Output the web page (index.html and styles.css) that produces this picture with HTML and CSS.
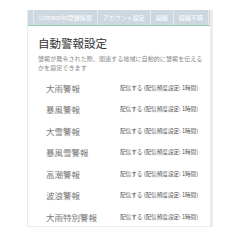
FILE: index.html
```html
<!DOCTYPE html>
<html lang="ja">
<head>
    <meta charset="UTF-8">
    <meta name="viewport" content="width=device-width, initial-scale=1.0">
    <title>自動警報設定</title>
    <link rel="stylesheet" href="styles.css">
</head>
<body>
    <div class="panel">
        <div class="tabs">
            <span class="tab tab-edge"></span>
            <span class="tab">Lineworks登録情報</span>
            <span class="tab">アカウント設定</span>
            <span class="tab">組織</span>
            <span class="tab">組織不明</span>
        </div>
        <div class="content">
            <h2 class="title">自動警報設定</h2>
            <p class="desc">警報が発令された際、関連する地域に自動的に警報を伝えるかを設定できます</p>
            <ul class="rows">
                <li class="row"><span class="name">大雨警報</span><span class="value">配信する (配信頻度設定: 1時間)</span></li>
                <li class="row"><span class="name">暴風警報</span><span class="value">配信する (配信頻度設定: 1時間)</span></li>
                <li class="row"><span class="name">大雪警報</span><span class="value">配信する (配信頻度設定: 1時間)</span></li>
                <li class="row"><span class="name">暴風雪警報</span><span class="value">配信する (配信頻度設定: 1時間)</span></li>
                <li class="row"><span class="name">高潮警報</span><span class="value">配信する (配信頻度設定: 1時間)</span></li>
                <li class="row"><span class="name">波浪警報</span><span class="value">配信する (配信頻度設定: 1時間)</span></li>
                <li class="row"><span class="name">大雨特別警報</span><span class="value">配信する (配信頻度設定: 1時間)</span></li>
            </ul>
        </div>
    </div>
</body>
</html>
```

FILE: styles.css
```css
* {margin: 0; padding: 0; box-sizing: border-box;}
body {
    background: #fff;
    padding: 10px 0 0 27px;
    font-family: "Noto Sans CJK JP", "Noto Sans", sans-serif;
}
.panel {
    width: 186px;
    height: 217px;
    border-left: 1px solid #ececec;
    border-right: 3px solid #ececec;
    border-bottom: 1px solid #ececec;
    overflow: hidden;
}
.tabs {
    display: flex;
    height: 16px;
    background: #cdd7df;
    border-bottom: 1px solid #8fd4a6;
    white-space: nowrap;
    overflow: hidden;
}
.tab {
    flex: none;
    color: #fff;
    font-size: 6px;
    line-height: 15px;
    padding: 0 5px;
    border-right: 1px solid #e3e9ee;
}
.tab-edge {
    width: 6px;
    padding: 0;
}
.content {
    padding: 9px 0 0 10px;
}
.title {
    font-size: 11.5px;
    font-weight: 400;
    color: #333;
    line-height: 16px;
}
.desc {
    margin-top: 3px;
    font-size: 6.1px;
    line-height: 9px;
    color: #888;
    padding-right: 2px;
}
.rows {
    list-style: none;
    margin-top: 5px;
}
.row {
    display: flex;
    align-items: center;
    height: 21.5px;
    padding-left: 8px;
}
.name {
    width: 74px;
    font-size: 8.5px;
    color: #777;
}
.value {
    font-size: 5.6px;
    color: #555;
    white-space: nowrap;
}
```
